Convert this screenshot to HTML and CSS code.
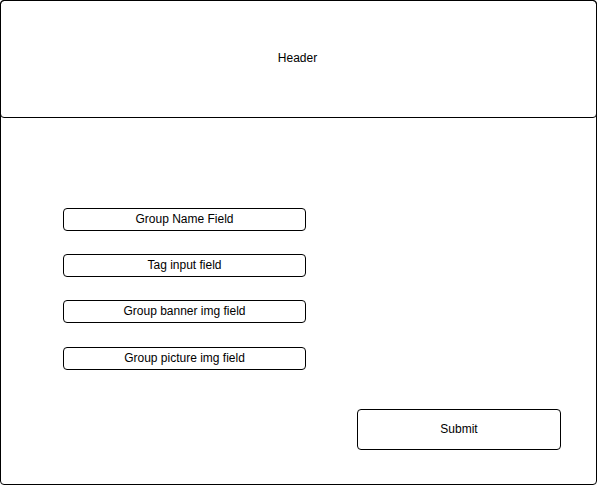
FILE: index.html
```html
<!DOCTYPE html>
<html lang="en">
<head>
  <meta charset="UTF-8">
  <meta name="viewport" content="width=device-width, initial-scale=1.0">
  <title>Create Group Wireframe</title>
  <link rel="stylesheet" href="styles.css">
</head>
<body>
  <div class="frame">
    <header class="header">Header</header>
    <form class="group-form">
      <div class="field">Group Name Field</div>
      <div class="field">Tag input field</div>
      <div class="field">Group banner img field</div>
      <div class="field">Group picture img field</div>
      <div class="submit">Submit</div>
    </form>
  </div>
</body>
</html>
```

FILE: styles.css
```css
body {
  margin: 0;
  padding: 0;
  background-color: #fff;
  font-family: "Liberation Sans", Arial, sans-serif;
  font-size: 12px;
  color: #000;
}
.frame {
  width: 597px;
  height: 485px;
  box-sizing: border-box;
  border: 1px solid #000;
  border-radius: 4px;
}
.header {
  height: 118px;
  margin: -1px -1px 0 -1px;
  padding: 0 2px 2px 0;
  box-sizing: border-box;
  border: 1px solid #000;
  border-radius: 4px;
  display: flex;
  align-items: center;
  justify-content: center;
}
.group-form {
  display: flex;
  flex-direction: column;
  align-items: flex-start;
  gap: 23px;
  padding: 90px 0 0 62px;
}
.field,
.submit {
  box-sizing: border-box;
  padding-bottom: 2px;
  border: 1px solid #000;
  border-radius: 4px;
  display: flex;
  align-items: center;
  justify-content: center;
}
.field {
  width: 243px;
  height: 23px;
}
.field:nth-child(4) {
  margin-top: 1px;
}
.submit {
  width: 204px;
  height: 41px;
  margin: 16px 0 0 294px;
}
```
